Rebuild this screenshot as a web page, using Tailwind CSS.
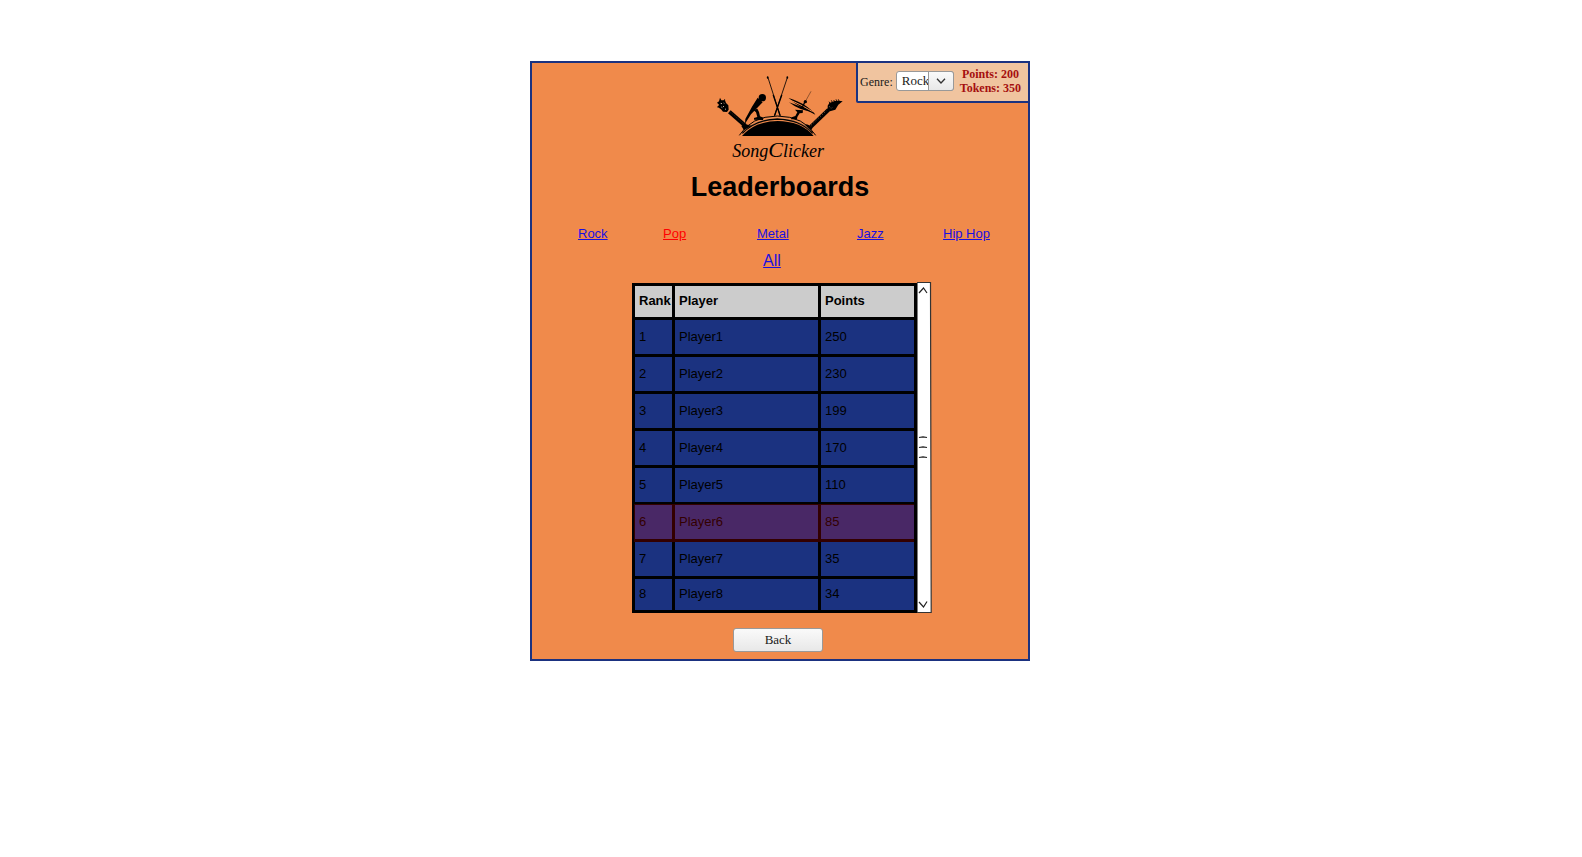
<!DOCTYPE html>
<html lang="en">
<head>
<meta charset="utf-8">
<meta name="viewport" content="width=device-width, initial-scale=1">
<title>SongClicker – Leaderboards</title>
<script src="https://cdn.jsdelivr.net/npm/@tailwindcss/browser@4"></script>
</head>
<body class="flex justify-center bg-white pt-[61px] pr-[22px] font-['Liberation_Sans',Arial,sans-serif] text-black">
<main class="relative flex w-full max-w-[500px] flex-col items-center border-2 border-[#1b3280] bg-[#f08a4b] pt-3 pb-[7px]">

  <!-- Genre picker and score, pinned over the corner -->
  <div class="absolute -top-0.5 -right-0.5 flex h-[42px] items-start rounded-bl-xs border-2 border-[#1b3280] bg-[#f0c49f] pr-[7px] pl-0.5 font-['Liberation_Serif','Times_New_Roman',serif] text-xs">
    <label for="genre" class="pt-[11px] leading-4 text-[#1a1a1a]">Genre:</label>
    <div class="relative mt-2 ml-[3px] h-5 w-[58px]">
      <select id="genre" class="h-5 w-full appearance-none overflow-hidden rounded-[3px] border border-[#999] bg-white pl-[5px] text-[13px] leading-[18px] text-[#1a1a1a]">
        <option>Rock</option><option>Pop</option><option>Metal</option><option>Jazz</option><option>Hip Hop</option>
      </select>
      <span class="pointer-events-none absolute inset-y-0 right-0 flex w-[26px] items-center justify-center rounded-r-[3px] border border-[#999] bg-linear-to-b from-[#fafafa] to-[#e8e8e8]">
        <svg class="h-[6px] w-[10px]" viewBox="0 0 10 6" fill="none" stroke="#333" stroke-width="1.3"><path d="M1 .7 5 5 9 .7"/></svg>
      </span>
    </div>
    <p class="mt-1 ml-[6px] text-center leading-[14px] font-bold text-[#a50f0f]">Points: 200<br>Tokens: 350</p>
  </div>

  <svg class="h-[90px] w-[130px]" viewBox="45 45 390 270" role="img" aria-label="SongClicker">
    <!-- drum -->
    <path d="M126 228Q142 208 172 194Q232 172 296 194Q326 208 341 228Z"/>
    <g fill="none" stroke="#000">
      <path d="M118 226Q153 169 232 168Q312 169 347 226" stroke-width="3"/>
      <path d="M127 220Q164 179 232 177Q302 179 338 220" stroke-width="4"/>
      <path d="M134 211Q170 176 232 173Q296 176 332 212" stroke="#f3b083" stroke-width="1"/>
    </g>
    <!-- drumsticks -->
    <g stroke="#000" stroke-linecap="round">
      <path d="M204 53 240 166M262 53 224 166" stroke-width="2.5"/>
      <path d="M220 106 240 166M245 106 224 166" stroke-width="4"/>
      <path d="M203 51v3M262 51v3" stroke-width="5"/>
    </g>
    <!-- microphone on its stand -->
    <circle cx="187" cy="113" r="11"/>
    <path d="M173 113 188 127 180 135 169 146 153 163 135 191 136 177 156 140Z"/>
    <path d="M160 150 172 146 177 156 180 169 190 173 189 180 162 179 162 174 172 171 168 157Z"/>
    <!-- cymbals on their stand -->
    <path d="M266 114Q298 124 318 138Q338 152 346 164Q322 152 303 141Q280 128 266 114Z"/>
    <path d="M270 120Q302 133 338 155" fill="none" stroke="#f08a4b" stroke-width="3"/>
    <path d="M267 127Q282 139 302 147Q320 153 337 157Q305 139 267 127Z"/>
    <path d="M333 94 318 121" stroke="#000" stroke-width="1.2"/>
    <circle cx="316" cy="125" r="5"/>
    <path d="M314 127 306 145" stroke="#000" stroke-width="4"/>
    <path d="M285 149 309 151 308 159 299 160 292 171 291 178 273 178 275 172 286 168 292 157Z"/>
    <!-- left guitar -->
    <path d="M88 155 136 197" stroke="#000" stroke-width="12"/>
    <path d="M92 157 133 193" stroke="#c69674" stroke-width="1.5" stroke-dasharray="2 6"/>
    <path d="M60 113 64 121 75 121 78 129 85 136 86 149 81 156 69 155 63 148 53 141 57 134 51 128 57 124Z"/>
    <path d="M74 118l-2 5M52 141l6-2" stroke="#000" stroke-width="3"/>
    <path d="M62 130l4 1M69 139l3 1M64 141l3 2M75 147l3 1M71 129l2 1" stroke="#f5d6c0" stroke-width="2.5"/>
    <path d="M124 198 133 191 137 193 154 197 132 211Z"/>
    <!-- right guitar -->
    <path d="M333 200 386 149" stroke="#000" stroke-width="12"/>
    <path d="M334 195 380 151" stroke="#c69674" stroke-width="2" stroke-dasharray="3 6"/>
    <path d="M383 137 388 129 404 123 417 122 428 124 415 134 406 149 390 154 383 149Z"/>
    <path d="M390 130l-3-5M397 127l-3-6M404 125l-3-5M411 124l-3-6M417 123l-2-5" stroke="#000" stroke-width="2.5"/>
    <path d="M388 139l2 3M394 145l2-2" stroke="#f5d6c0" stroke-width="1.5"/>
    <path d="M316 196 320 193 331 197 338 203 333 211Z"/>
    <text x="97" y="291" class="font-['Liberation_Serif',serif] text-[54px] italic">Song<tspan class="text-[66px]">C</tspan>licker</text>
  </svg>

  <h1 class="mt-1.5 text-[27px] leading-8 font-bold">Leaderboards</h1>

  <nav class="mt-[21px] w-full" aria-label="Genres">
    <div class="grid grid-cols-[85fr_94fr_100fr_86fr_85fr] pl-[46px] text-[13px] leading-5 text-[#1a0fe0]">
      <a href="#rock" class="underline">Rock</a>
      <a href="#pop" class="text-[#ff0000] underline">Pop</a>
      <a href="#metal" class="underline">Metal</a>
      <a href="#jazz" class="underline">Jazz</a>
      <a href="#hiphop" class="underline">Hip Hop</a>
    </div>
    <div class="mt-[5px] pr-4 text-center leading-6 text-[#1a0fe0]"><a href="#all" class="underline">All</a></div>
  </nav>

  <div class="mt-[9px] flex pl-1">
    <div class="relative mt-px">
      <table class="w-[285px] table-fixed border-separate border-spacing-[3px] bg-black text-left text-[13px] leading-5">
        <thead>
          <tr class="h-[31px] bg-[#ccc]"><th class="w-[37px] pb-0.5 pl-1">Rank</th><th class="w-[143px] pb-0.5 pl-1">Player</th><th class="pb-0.5 pl-1">Points</th></tr>
        </thead>
        <tbody class="bg-[#1b3280]">
          <tr class="h-[34px]"><td class="pl-1">1</td><td class="pl-1">Player1</td><td class="pl-1">250</td></tr>
          <tr class="h-[34px]"><td class="pl-1">2</td><td class="pl-1">Player2</td><td class="pl-1">230</td></tr>
          <tr class="h-[34px]"><td class="pl-1">3</td><td class="pl-1">Player3</td><td class="pl-1">199</td></tr>
          <tr class="h-[34px]"><td class="pl-1">4</td><td class="pl-1">Player4</td><td class="pl-1">170</td></tr>
          <tr class="h-[34px]"><td class="pl-1">5</td><td class="pl-1">Player5</td><td class="pl-1">110</td></tr>
          <tr class="h-[34px]"><td class="pl-1">6</td><td class="pl-1">Player6</td><td class="pl-1">85</td></tr>
          <tr class="h-[34px]"><td class="pl-1">7</td><td class="pl-1">Player7</td><td class="pl-1">35</td></tr>
          <tr class="h-[31px]"><td class="pb-0.5 pl-1">8</td><td class="pb-0.5 pl-1">Player8</td><td class="pb-0.5 pl-1">34</td></tr>
        </tbody>
      </table>
      <!-- tint over the current player's row -->
      <div class="pointer-events-none absolute top-[221px] right-[3px] left-[2px] h-[38px] bg-[#ff0000]/20"></div>
    </div>
    <svg class="h-[331px] w-[15px]" viewBox="0 0 15 331" fill="none" stroke="#222" aria-hidden="true">
      <path d="M0 .5H13.5L14.2 330.5H0Z" fill="#fff" stroke="#333" stroke-width="1.2"/>
      <path d="M0 1V330" stroke="#777"/>
      <path d="M2 11 6.5 6 10 11M2 320 6.5 325 10 319.500" stroke-width="1.2"/>
      <path d="M2 155.500 6 154.800 10 155.500M2 165.500 6 164.800 10 165.500M2 175.500 6 174.800 10 175.500" stroke-width="1.2"/>
    </svg>
  </div>

  <button type="button" class="mt-[15px] mr-1 h-6 w-[90px] rounded-[3px] border border-[#999] bg-linear-to-b from-[#fafafa] to-[#e8e8e8] font-['Liberation_Serif','Times_New_Roman',serif] text-[13px] leading-5 text-[#1a1a1a]">Back</button>
</main>
</body>
</html>
